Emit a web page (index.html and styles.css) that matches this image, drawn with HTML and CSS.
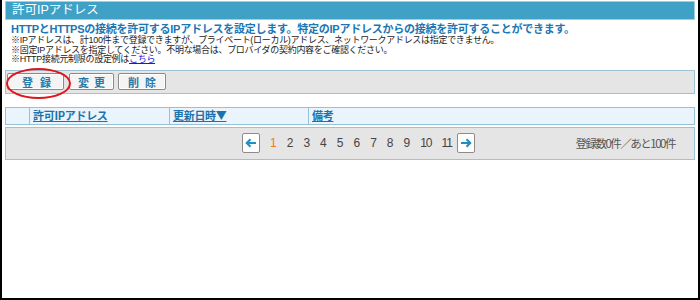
FILE: index.html
```html
<!DOCTYPE html>
<html lang="ja">
<head>
    <meta charset="UTF-8">
    <title>許可IPアドレス</title>
    <link rel="stylesheet" href="styles.css">
</head>
<body>
<div class="frame">
    <h1 class="title">許可IPアドレス</h1>
    <div class="desc">
        <p class="lead">HTTPとHTTPSの接続を許可するIPアドレスを設定します。特定のIPアドレスからの接続を許可することができます。</p>
        <p class="note">※IPアドレスは、計100件まで登録できますが、プライベート(ローカル)アドレス、ネットワークアドレスは指定できません。</p>
        <p class="note">※固定IPアドレスを指定してください。不明な場合は、プロバイダの契約内容をご確認ください。</p>
        <p class="note">※HTTP接続元制限の設定例は<a href="#">こちら</a></p>
    </div>
    <div class="toolbar">
        <button class="btn btn-add">登録</button>
        <button class="btn btn-edit">変更</button>
        <button class="btn btn-del">削除</button>
        <span class="mark"></span>
    </div>
    <table class="list">
        <tr>
            <th class="chk"></th>
            <th class="c-ip"><a href="#">許可IPアドレス</a></th>
            <th class="c-date"><a href="#">更新日時▼</a></th>
            <th><a href="#">備考</a></th>
        </tr>
    </table>
    <div class="pager">
        <div class="pages">
            <span class="arrow">
                <svg width="12" height="10" viewBox="0 0 12 10"><path d="M11 5H2M5.5 1.2L1.7 5l3.8 3.8" fill="none" stroke="#1f8fc0" stroke-width="2"/></svg>
            </span>
            <span class="cur">1</span>
            <span>2</span>
            <span>3</span>
            <span>4</span>
            <span>5</span>
            <span>6</span>
            <span>7</span>
            <span>8</span>
            <span>9</span>
            <span class="two">10</span>
            <span class="two">11</span>
            <span class="arrow">
                <svg width="12" height="10" viewBox="0 0 12 10"><path d="M1 5h9M6.5 1.2L10.3 5 6.5 8.8" fill="none" stroke="#1f8fc0" stroke-width="2"/></svg>
            </span>
        </div>
        <div class="count">登録数0件／あと100件</div>
    </div>
</div>
</body>
</html>
```

FILE: styles.css
```css
html, body {
    margin: 0;
    padding: 0;
    background: #fff;
}
.frame {
    box-sizing: border-box;
    width: 700px;
    height: 300px;
    padding: 1px 3px 0 3px;
    border: 2px solid #000;
    border-top: 0;
    font-family: "Liberation Sans", "Noto Sans CJK JP", sans-serif;
    color: #222;
    position: relative;
}
.title {
    margin: 0;
    height: 17px;
    padding-left: 6px;
    background: #3fa1c6;
    border: 1px solid #9fd0e2;
    color: #fff;
    font-size: 12.5px;
    font-weight: normal;
    line-height: 17px;
}
.desc {
    padding: 2px 0 0 6px;
}
.desc p {
    margin: 0;
}
.lead {
    color: #1b76b4;
    font-size: 11px;
    font-weight: bold;
    line-height: 14px;
    letter-spacing: -0.25px;
}
.note {
    font-size: 9px;
    line-height: 9.5px;
    letter-spacing: -0.3px;
    color: #222;
}
.note a {
    color: #1a1adf;
}
.toolbar {
    position: relative;
    display: flex;
    align-items: center;
    margin-top: 5px;
    height: 22px;
    padding-left: 1px;
    background: #e5e5e5;
    border: 1px solid #9ec3d6;
}
.btn {
    height: 17px;
    margin: 0 4px 0 0;
    padding: 0 3px 0 8px;
    background: #f4f4f4;
    border: 1px solid #8a8a8a;
    border-radius: 2px;
    box-shadow: inset 0 0 0 1px #fff;
    color: #2379a8;
    font-family: "Noto Sans CJK JP", sans-serif;
    font-size: 11px;
    font-weight: bold;
    line-height: 14px;
    letter-spacing: 5px;
}
.btn-add {
    padding: 0 5px 0 14px;
    letter-spacing: 7px;
    margin-right: 5px;
}
.btn-del {
    padding: 0 3px 0 9px;
    letter-spacing: 6px;
}
.mark {
    position: absolute;
    left: 0;
    top: -3px;
    width: 61px;
    height: 27px;
    border: 2px solid #e0141b;
    border-radius: 50%;
}
.list {
    width: 690px;
    margin: 13px 0 0 0;
    border-collapse: collapse;
    background: #e9f4fc;
}
.list th {
    height: 16px;
    padding: 0 0 0 3px;
    border: 1px solid #96c2d9;
    text-align: left;
    font-size: 11px;
    line-height: 14px;
}
.list th a {
    color: #1d72a9;
    font-family: "Noto Sans CJK JP", sans-serif;
    font-weight: bold;
    letter-spacing: -0.3px;
}
.list .chk {
    width: 20px;
}
.list .c-ip {
    width: 136px;
}
.list .c-date {
    width: 135px;
}
.pager {
    display: flex;
    align-items: center;
    margin-top: 2px;
    height: 31px;
    background: #e5e5e5;
    border: 1px solid #9ec3d6;
    font-size: 12px;
    color: #444;
}
.pages {
    display: flex;
    align-items: center;
    gap: 10px;
    margin-left: 236px;
}
.pages .cur {
    color: #f07a1e;
}
.pages .two {
    letter-spacing: -1px;
}
.pages .arrow {
    display: flex;
    align-items: center;
    justify-content: center;
    width: 16px;
    height: 18px;
    background: #fff;
    border: 1px solid #8c8c8c;
    border-radius: 2px;
}
.pages .arrow:last-child {
    margin-left: -5px;
}
.count {
    margin-left: auto;
    margin-right: 19px;
    font-family: "Noto Sans CJK JP", sans-serif;
    font-size: 11.5px;
    letter-spacing: -1.5px;
    color: #555;
}
```
